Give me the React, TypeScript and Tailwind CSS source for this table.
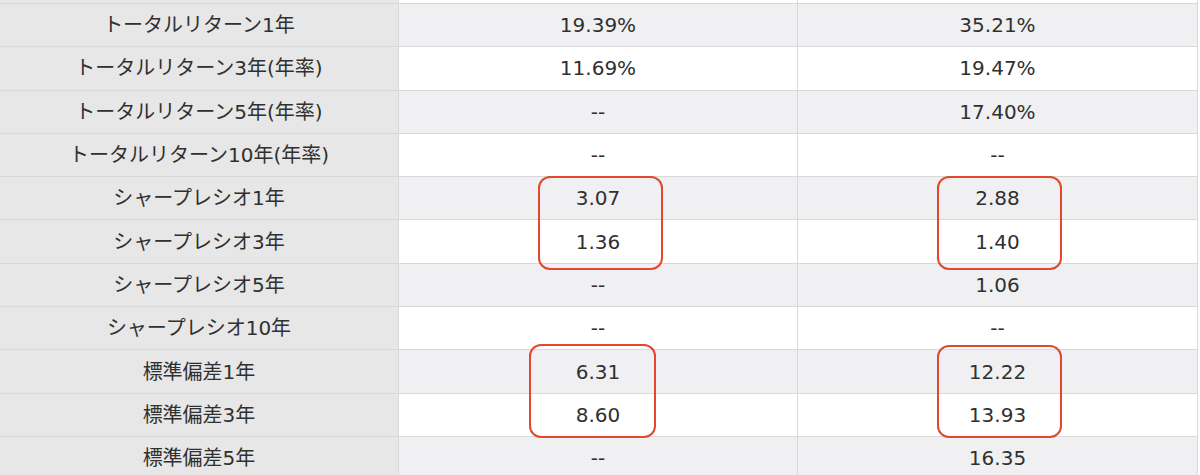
type Row = {
  label: string;
  a: string;
  b: string;
};

const rows: Row[] = [
  { label: "", a: "", b: "" },
  { label: "トータルリターン1年", a: "19.39%", b: "35.21%" },
  { label: "トータルリターン3年(年率)", a: "11.69%", b: "19.47%" },
  { label: "トータルリターン5年(年率)", a: "--", b: "17.40%" },
  { label: "トータルリターン10年(年率)", a: "--", b: "--" },
  { label: "シャープレシオ1年", a: "3.07", b: "2.88" },
  { label: "シャープレシオ3年", a: "1.36", b: "1.40" },
  { label: "シャープレシオ5年", a: "--", b: "1.06" },
  { label: "シャープレシオ10年", a: "--", b: "--" },
  { label: "標準偏差1年", a: "6.31", b: "12.22" },
  { label: "標準偏差3年", a: "8.60", b: "13.93" },
  { label: "標準偏差5年", a: "--", b: "16.35" },
];

// red marks drawn around the compared values
const marks = [
  { left: 538, top: 176, width: 125, height: 94 },
  { left: 937, top: 176, width: 125, height: 94 },
  { left: 529, top: 344, width: 127, height: 94 },
  { left: 937, top: 345, width: 125, height: 93 },
];

export default function App() {
  return (
    <div className="h-[475px] w-[1200px] overflow-hidden bg-white">
      <div
        className="relative -mt-[39.3px] w-[1198px] text-[20px] text-[#303030]"
        style={{ fontFamily: '"DejaVu Sans", "Noto Sans CJK JP", sans-serif' }}
      >
        {rows.map((row, i) => {
          const shaded = i % 2 === 1;
          return (
            <div
              key={i}
              className="grid h-[43.3px] grid-cols-[399px_399px_400px] border-b border-[#d9d9d9]"
            >
              <div className="flex items-center justify-center border-r border-[#d9d9d9] bg-[#e7e7e7]">
                {row.label}
              </div>
              <div
                className={`flex items-center justify-center border-r border-[#d9d9d9] ${
                  shaded ? "bg-[#f0f0f2]" : "bg-white"
                }`}
              >
                {row.a}
              </div>
              <div
                className={`flex items-center justify-center border-r border-[#d9d9d9] ${
                  shaded ? "bg-[#f0f0f2]" : "bg-white"
                }`}
              >
                {row.b}
              </div>
            </div>
          );
        })}

        {marks.map((m) => (
          <div
            key={`${m.left}-${m.top}`}
            className="pointer-events-none absolute rounded-[12px] border-2 border-[#e4462f]"
            style={{
              left: m.left,
              top: m.top + 39.3,
              width: m.width,
              height: m.height,
            }}
          />
        ))}
      </div>
    </div>
  );
}
